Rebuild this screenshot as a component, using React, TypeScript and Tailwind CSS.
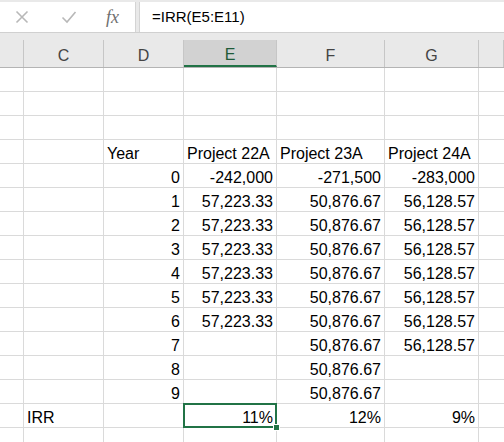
import React from 'react';

const font = { fontFamily: '"Liberation Sans", Arial, sans-serif' };

type Cell = { v: string; left?: boolean };

const cols = [
  { key: 'B', w: 'w-[24px]' },
  { key: 'C', w: 'w-[80px]' },
  { key: 'D', w: 'w-[80px]' },
  { key: 'E', w: 'w-[93px]' },
  { key: 'F', w: 'w-[108px]' },
  { key: 'G', w: 'w-[94px]' },
  { key: 'H', w: 'flex-1' },
];

const pay22 = '57,223.33';
const pay23 = '50,876.67';
const pay24 = '56,128.57';

// C, D, E, F, G
const rows: (Cell | null)[][] = [
  [null, null, null, null, null],
  [null, null, null, null, null],
  [null, null, null, null, null],
  [null, { v: 'Year', left: true }, { v: 'Project 22A', left: true }, { v: 'Project 23A', left: true }, { v: 'Project 24A', left: true }],
  [null, { v: '0' }, { v: '-242,000' }, { v: '-271,500' }, { v: '-283,000' }],
  [null, { v: '1' }, { v: pay22 }, { v: pay23 }, { v: pay24 }],
  [null, { v: '2' }, { v: pay22 }, { v: pay23 }, { v: pay24 }],
  [null, { v: '3' }, { v: pay22 }, { v: pay23 }, { v: pay24 }],
  [null, { v: '4' }, { v: pay22 }, { v: pay23 }, { v: pay24 }],
  [null, { v: '5' }, { v: pay22 }, { v: pay23 }, { v: pay24 }],
  [null, { v: '6' }, { v: pay22 }, { v: pay23 }, { v: pay24 }],
  [null, { v: '7' }, null, { v: pay23 }, { v: pay24 }],
  [null, { v: '8' }, null, { v: pay23 }, null],
  [null, { v: '9' }, null, { v: pay23 }, null],
  [{ v: 'IRR', left: true }, null, { v: '11%' }, { v: '12%' }, { v: '9%' }],
  [null, null, null, null, null],
];

const SELECTED_ROW = 14;

function FormulaBar() {
  return (
    <div className="flex h-[33px] bg-[#e9e9e9] pt-[2px] border-b border-[#d0d0d0]">
      <div className="flex w-[136px] items-center bg-white border-r border-[#d4d4d4]">
        <svg width="14" height="14" viewBox="0 0 14 14" className="ml-[15px]">
          <path d="M1.5 1.5 L12.5 12.5 M12.5 1.5 L1.5 12.5" stroke="#b8b8b8" strokeWidth="1.6" fill="none" />
        </svg>
        <svg width="16" height="14" viewBox="0 0 16 14" className="ml-[32px]">
          <path d="M1.5 7.5 L6 12 L14.5 2" stroke="#b8b8b8" strokeWidth="1.6" fill="none" />
        </svg>
        <span
          className="ml-[29px] text-[18px] italic text-[#6f6f6f] leading-none"
          style={{ fontFamily: '"Liberation Serif", "Times New Roman", serif' }}
        >
          fx
        </span>
      </div>
      <div className="ml-[3px] flex flex-1 items-center bg-white border-l border-[#d4d4d4] pl-[12px] text-[15px] text-black">
        =IRR(E5:E11)
      </div>
    </div>
  );
}

function HeaderRow() {
  return (
    <div className="flex bg-[#e9e9e9] pt-[7px] border-b border-[#b4b4b4]">
      {cols.map((c) => (
        <div
          key={c.key}
          className={`${c.w} h-[27px] flex items-center justify-center pt-[5px] text-[16px] border-r border-[#c6c6c6] ${
            c.key === 'E' ? 'bg-[#d2d2d2] text-[#1e5a38] border-b-2 border-b-[#217346]' : 'text-[#444444]'
          }`}
        >
          {c.key === 'B' || c.key === 'H' ? '' : c.key}
        </div>
      ))}
    </div>
  );
}

export default function App() {
  return (
    <div className="w-[504px] h-[442px] overflow-hidden bg-white" style={font}>
      <FormulaBar />
      <HeaderRow />
      {rows.map((r, ri) => (
        <div key={ri} className="flex h-[24px]">
          <div className="w-[24px] border-r border-b border-[#dadada]" />
          {r.map((cell, ci) => {
            const col = cols[ci + 1];
            const selected = ri === SELECTED_ROW && col.key === 'E';
            return (
              <div
                key={ci}
                className={`${col.w} relative flex items-center pt-[5px] border-r border-b border-[#dadada] text-[16px] text-black whitespace-nowrap ${
                  cell?.left ? 'justify-start pl-[3px]' : 'justify-end pr-[3px]'
                } ${selected ? 'z-10' : ''}`}
              >
                {cell?.v}
                {selected && (
                  <>
                    <div className="absolute -left-[1px] -top-[1px] -right-[1px] -bottom-[1px] border-2 border-[#217346]" />
                    <div className="absolute -right-[4px] -bottom-[4px] w-[7px] h-[7px] bg-[#217346] border border-white" />
                  </>
                )}
              </div>
            );
          })}
          <div className="flex-1 border-b border-[#dadada]" />
        </div>
      ))}
    </div>
  );
}
